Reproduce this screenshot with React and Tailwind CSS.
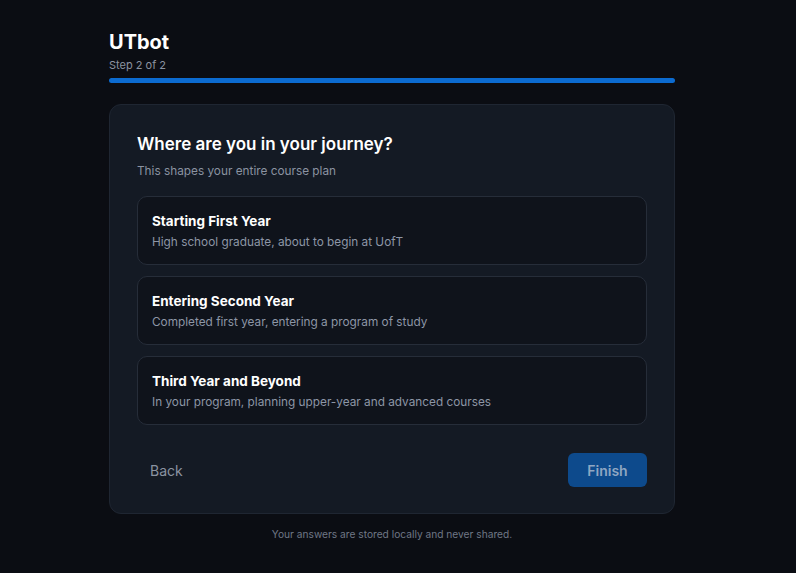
import { useState } from "react";

const options = [
  { title: "Starting First Year", desc: "High school graduate, about to begin at UofT" },
  { title: "Entering Second Year", desc: "Completed first year, entering a program of study" },
  { title: "Third Year and Beyond", desc: "In your program, planning upper-year and advanced courses" },
];

export default function App() {
  const [selected, setSelected] = useState(null);

  return (
    <div className="min-h-screen bg-[#0b0d13] font-['Inter',sans-serif] text-white">
      <div className="ml-[109px] w-[566px] pt-[29px]">
        <h1 className="text-[20px] font-bold leading-[26px]">UTbot</h1>
        <p className="mt-[3px] text-[11px] leading-[14px] text-[#8b93a1]">Step 2 of 2</p>
        <div className="mt-[6px] h-[5px] w-full rounded-full bg-[#0c6bd0]" />

        <div className="mt-[21px] rounded-xl border border-[#1f2632] bg-[#141a24] px-[27px] pt-[27px] pb-[26px]">
          <h2 className="text-[17px] font-semibold leading-[24px]">Where are you in your journey?</h2>
          <p className="mt-[7px] text-[11.8px] leading-[16px] text-[#8b93a1]">This shapes your entire course plan</p>

          <div className="mt-[17px] flex flex-col gap-[11px]">
            {options.map((o, i) => (
              <button
                key={o.title}
                onClick={() => setSelected(i)}
                className={
                  "flex h-[69px] flex-col justify-center rounded-[10px] border bg-[#0f131b] px-[14px] text-left " +
                  (selected === i ? "border-[#0c6bd0]" : "border-[#262d39]")
                }
              >
                <span className="text-[13.5px] font-bold leading-[18px]">{o.title}</span>
                <span className="mt-[4px] text-[11.8px] leading-[16px] text-[#8d96a6]">{o.desc}</span>
              </button>
            ))}
          </div>

          <div className="mt-[28px] flex items-center justify-between">
            <button className="px-[13px] text-[14px] text-[#8b93a1]">Back</button>
            <button className="h-[34px] w-[79px] rounded-md bg-[#0d4a8c] text-[14px] font-semibold text-[#8fa6c2]">
              Finish
            </button>
          </div>
        </div>

        <p className="mt-[13px] text-center text-[10.2px] text-[#6f7786]">Your answers are stored locally and never shared.</p>
      </div>
    </div>
  );
}
